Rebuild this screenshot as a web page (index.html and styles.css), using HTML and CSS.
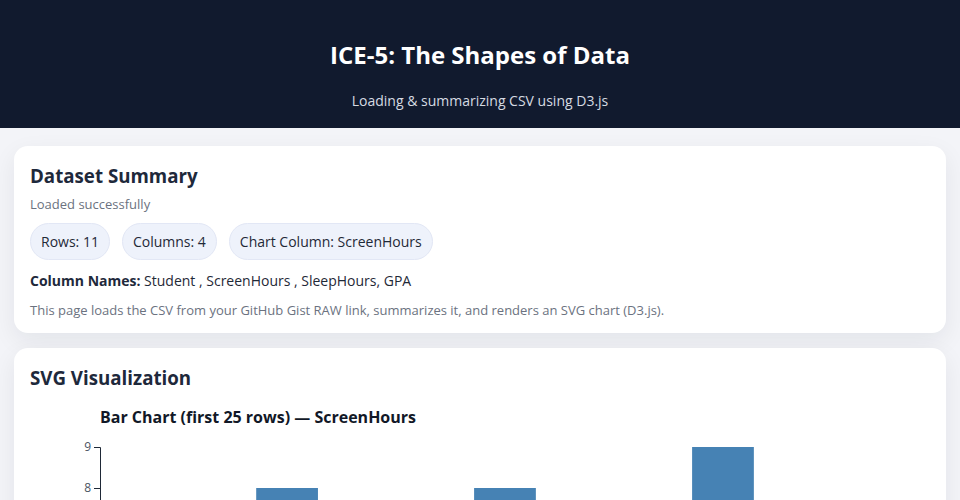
FILE: index.html
```html
<!DOCTYPE html>
<html lang="en">
<head>
<meta charset="utf-8">
<title>ICE-5: The Shapes of Data</title>
<link rel="stylesheet" href="styles.css">
</head>
<body>
<header class="hero">
  <h1 class="hero-title">ICE-5: The Shapes of Data</h1>
  <p class="hero-sub">Loading &amp; summarizing CSV using D3.js</p>
</header>
<main class="main">
  <section class="card">
    <h2 class="card-title">Dataset Summary</h2>
    <p class="status">Loaded successfully</p>
    <div class="pills">
      <span class="pill">Rows: 11</span>
      <span class="pill">Columns: 4</span>
      <span class="pill">Chart Column: ScreenHours</span>
    </div>
    <p class="colnames"><strong>Column Names:</strong> Student , ScreenHours , SleepHours, GPA</p>
    <p class="note">This page loads the CSV from your GitHub Gist RAW link, summarizes it, and renders an SVG chart (D3.js).</p>
  </section>
  <section class="card">
    <h2 class="card-title">SVG Visualization</h2>
    <svg class="chart" width="900" height="470" viewBox="0 0 900 470">
      <text class="chart-title" x="70" y="22">Bar Chart (first 25 rows) — ScreenHours</text>
      <g transform="translate(70,0)">
        <g class="bars">
          <rect x="10.9" y="169" width="61.75" height="246"/>
          <rect x="83.6" y="210" width="61.75" height="205"/>
          <rect x="156.2" y="87" width="61.75" height="328"/>
          <rect x="228.8" y="251" width="61.75" height="164"/>
          <rect x="301.5" y="128" width="61.75" height="287"/>
          <rect x="374.1" y="87" width="61.75" height="328"/>
          <rect x="446.8" y="292" width="61.75" height="123"/>
          <rect x="519.4" y="169" width="61.75" height="246"/>
          <rect x="592.1" y="46" width="61.75" height="369"/>
          <rect x="664.7" y="210" width="61.75" height="205"/>
          <rect x="737.3" y="128" width="61.75" height="287"/>
        </g>
        <g class="axis">
          <path class="domain" d="M-6,415.5H0.5V46.5H-6"/>
          <g transform="translate(0,46.5)"><line x2="-6"/><text x="-9" dy="0.32em">9</text></g>
          <g transform="translate(0,87.5)"><line x2="-6"/><text x="-9" dy="0.32em">8</text></g>
          <g transform="translate(0,128.5)"><line x2="-6"/><text x="-9" dy="0.32em">7</text></g>
          <g transform="translate(0,169.5)"><line x2="-6"/><text x="-9" dy="0.32em">6</text></g>
          <g transform="translate(0,210.5)"><line x2="-6"/><text x="-9" dy="0.32em">5</text></g>
          <g transform="translate(0,251.5)"><line x2="-6"/><text x="-9" dy="0.32em">4</text></g>
          <g transform="translate(0,292.5)"><line x2="-6"/><text x="-9" dy="0.32em">3</text></g>
          <g transform="translate(0,333.5)"><line x2="-6"/><text x="-9" dy="0.32em">2</text></g>
          <g transform="translate(0,374.5)"><line x2="-6"/><text x="-9" dy="0.32em">1</text></g>
          <g transform="translate(0,415.5)"><line x2="-6"/><text x="-9" dy="0.32em">0</text></g>
          <path class="domain" d="M0.5,415.5H810.5"/>
        </g>
      </g>
    </svg>
  </section>
</main>
</body>
</html>
```
FILE: styles.css
```css
* { box-sizing: border-box; }
html, body { margin: 0; padding: 0; }
body {
  background: #f3f4f8;
  font-family: "Open Sans", "Noto Sans", "Liberation Sans", sans-serif;
  color: #1f2937;
}
.hero {
  background: #111a2e;
  color: #ffffff;
  text-align: center;
  padding: 38px 16px 17px;
}
.hero-title {
  margin: 0;
  font-size: 24px;
  line-height: 34px;
  font-weight: 700;
}
.hero-sub {
  margin: 19px 0 0;
  font-size: 14px;
  line-height: 20px;
  color: #d6dae2;
}
.main {
  display: flex;
  flex-direction: column;
  gap: 15px;
  padding: 18px 14px;
}
.card {
  background: #ffffff;
  border-radius: 14px;
  padding: 16px 16px 14px;
  box-shadow: 0 8px 24px rgba(15, 23, 42, 0.07);
}
.card-title {
  margin: 0;
  font-size: 18.72px;
  line-height: 27px;
  font-weight: 700;
  color: #1e293b;
}
.status {
  margin: 6px 0 0;
  font-size: 13px;
  line-height: 18px;
  color: #6b7280;
}
.pills {
  display: flex;
  gap: 12px;
  margin-top: 10px;
}
.pill {
  background: #eef2fb;
  border: 1px solid #e2e7f5;
  border-radius: 999px;
  padding: 8px 10px;
  font-size: 14px;
  line-height: 19px;
  color: #1f2937;
}
.colnames {
  margin: 11px 0 0;
  font-size: 14px;
  line-height: 20px;
  color: #1f2937;
}
.colnames strong { color: #1e293b; }
.note {
  margin: 10px 0 0;
  font-size: 13px;
  line-height: 18px;
  color: #6b7280;
}
.chart {
  display: block;
  margin-top: 10px;
}
.chart-title {
  font-size: 16px;
  font-weight: 700;
  fill: #111827;
  font-family: "Open Sans", "Noto Sans", sans-serif;
}
.bars rect { fill: #4682b4; }
.axis .domain { fill: none; stroke: #1f2937; stroke-width: 1; }
.axis line { stroke: #1f2937; stroke-width: 1; }
.axis text {
  font-size: 12px;
  fill: #4b5563;
  text-anchor: end;
  font-family: "Open Sans", "Noto Sans", sans-serif;
}
```
